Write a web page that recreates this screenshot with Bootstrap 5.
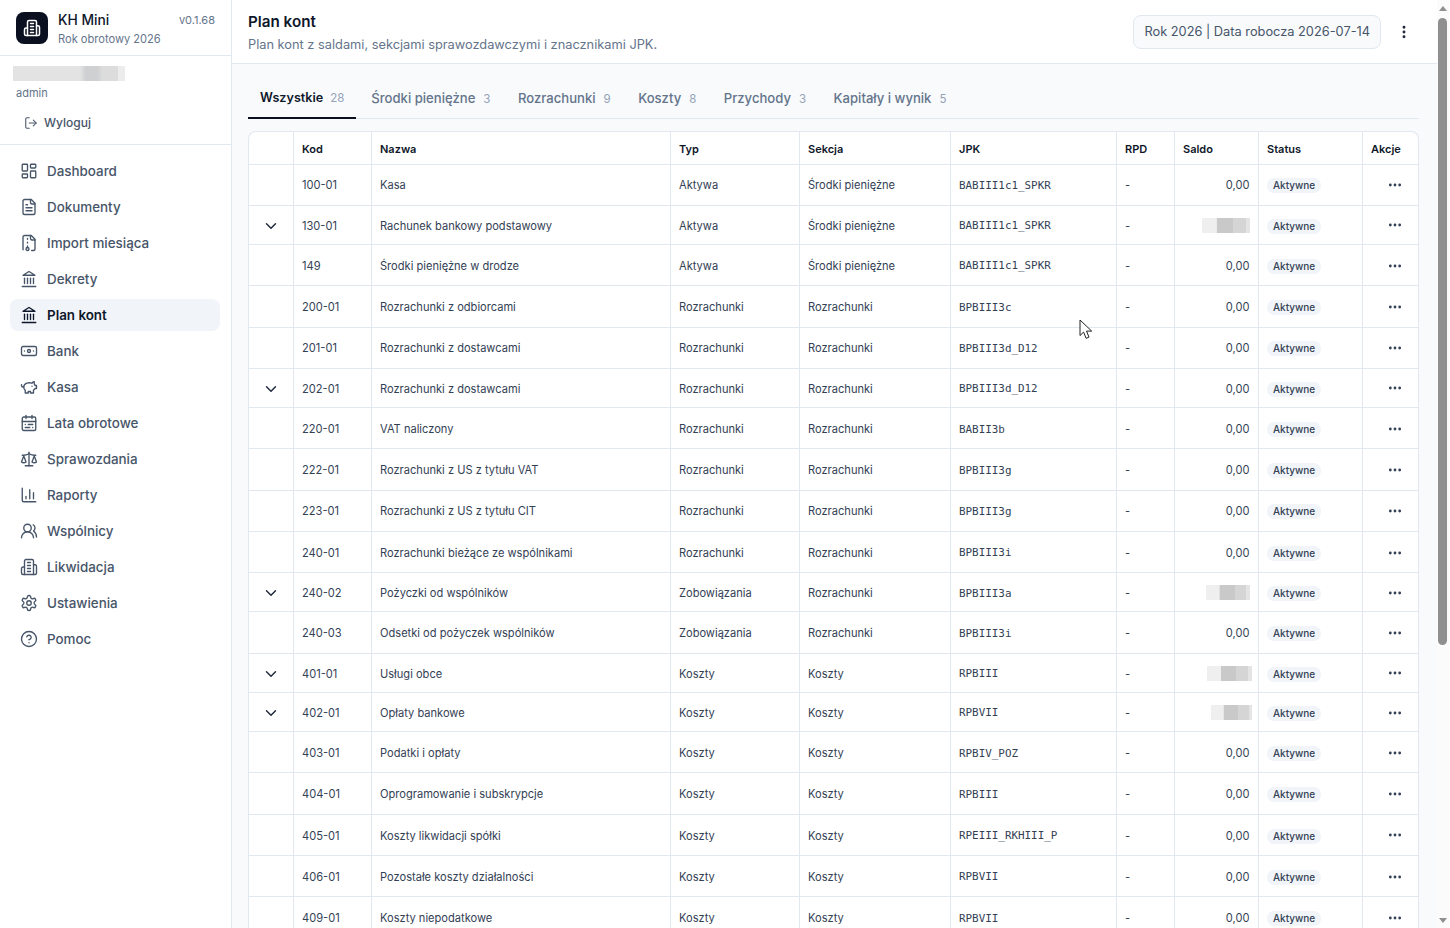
<!DOCTYPE html>
<html lang="pl">
<head>
    <meta charset="UTF-8">
    <meta name="viewport" content="width=device-width, initial-scale=1.0">
    <title>KH Mini - Plan kont</title>
    <link href="https://cdn.jsdelivr.net/npm/bootstrap@5.3.0/dist/css/bootstrap.min.css" rel="stylesheet">
    <style>
        html, body {
            height: 100%;
            overflow: hidden;
        }
        body {
            background-color: #f8fafc;
            font-family: Inter, "Noto Sans", sans-serif;
            color: #0f172a;
        }
        .ico {
            width: 18px;
            height: 18px;
            fill: none;
            stroke: currentColor;
            stroke-width: 2;
            stroke-linecap: round;
            stroke-linejoin: round;
            flex-shrink: 0;
        }
        .app-shell {
            height: 928px;
            position: relative;
            overflow: hidden;
        }

        /* sidebar */
        .side {
            width: 232px;
            flex-shrink: 0;
            background: #fff;
            border-right: 1px solid #e2e8f0;
        }
        .side-brand {
            height: 56px;
            padding: 12px 16px;
            border-bottom: 1px solid #e2e8f0;
            gap: 10px;
        }
        .brand-logo {
            width: 32px;
            height: 32px;
            flex-shrink: 0;
            border-radius: 8px;
            background: #0b1020;
            color: #fff;
        }
        .brand-name {
            font-size: 13.8px;
            font-weight: 500;
            line-height: 18px;
            margin-top: -1px;
        }
        .brand-year {
            font-size: 11.1px;
            line-height: 18px;
            margin-top: 1px;
            color: #64748b;
            white-space: nowrap;
        }
        .brand-ver {
            font-size: 11px;
            color: #64748b;
            margin-left: auto;
            margin-top: -1px;
            line-height: 18px;
        }
        .side-user {
            height: 89px;
            padding: 10px 13px 0;
            border-bottom: 1px solid #e2e8f0;
        }
        .user-blur {
            width: 112px;
            height: 15px;
            background: linear-gradient(90deg, #e3e3e3 0 60%, #cfd0d2 65% 75%, #dcdcdc 80% 94%, #ececec 94%);
        }
        .user-role {
            font-size: 11px;
            color: #64748b;
            margin: 5px 0 0 3px;
            line-height: 14px;
        }
        .logout-link {
            font-size: 12px;
            font-weight: 500;
            color: #475569;
            margin: 15px 0 0 11px;
            gap: 6px;
            line-height: 16px;
        }
        .logout-link .ico {
            width: 14px;
            height: 14px;
            stroke-width: 1.8;
        }
        .side-nav {
            padding: 10px 11px 0 10px;
            gap: 4px;
        }
        .side-item {
            height: 32px;
            padding: 0 10px;
            gap: 9px;
            font-size: 13.4px;
            font-weight: 500;
            color: #475569;
            border-radius: 8px;
            text-decoration: none;
        }
        .side-item .ico {
            width: 18px;
            height: 18px;
            stroke-width: 1.8;
        }
        .side-item.is-on {
            background: #f1f5f9;
            color: #0f172a;
            font-weight: 600;
        }

        /* main */
        .main-col {
            min-width: 0;
        }
        .top-head {
            height: 64px;
            flex-shrink: 0;
            background: #fff;
            border-bottom: 1px solid #e2e8f0;
            padding: 0 16px;
        }
        .head-text {
            padding-top: 4px;
        }
        .head-title {
            font-size: 15.2px;
            font-weight: 600;
            line-height: 20px;
            margin: 0;
        }
        .head-sub {
            font-size: 12.8px;
            line-height: 20px;
            color: #64748b;
            margin: 3px 0 0;
        }
        .year-chip {
            height: 34px;
            padding: 0 10px;
            border: 1px solid #e2e8f0;
            border-radius: 8px;
            background: #f8fafc;
            font-size: 12.8px;
            color: #475569;
        }
        .kebab {
            width: 16px;
            height: 16px;
            margin: 0 9px 0 15px;
            color: #1e293b;
            stroke-width: 2.4;
        }
        .body-pad {
            flex-shrink: 0;
            padding: 16px 18px 0 16px;
        }
        .acct-tabs {
            height: 39px;
            border-bottom: 1px solid #e2e8f0;
        }
        .acct-tabs .nav-link {
            height: 39px;
            padding: 0 12px;
            border: 0;
            border-radius: 0;
            font-size: 13.1px;
            font-weight: 500;
            line-height: 36px;
            color: #64748b;
            background: none;
            margin-right: 3.5px;
        }
        .acct-tabs .nav-link.active {
            color: #0f172a;
            font-size: 12.6px;
            font-weight: 600;
            border-bottom: 2px solid #0b1020;
            background: none;
            margin-right: 3px;
        }
        .tab-count {
            font-size: 11.5px;
            font-weight: 400;
            color: #94a3b8;
            margin-left: 8px;
        }
        .nav-link.active .tab-count {
            margin-left: 7px;
        }
        .table-box {
            margin-top: 12px;
            background: #fff;
            border: 1px solid #e2e8f0;
            border-bottom: 0;
            border-radius: 8px 8px 0 0;
            overflow: hidden;
        }
        .acct-table {
            table-layout: fixed;
            width: 1170px;
            margin: 0;
            border-collapse: collapse;
            font-size: 11.1px;
            color: #334155;
        }
        .acct-table th, .acct-table td {
            padding: 2px 8px 0 8.5px;
            border-bottom: 1px solid #e2e8f0;
            border-right: 1px solid #e2e8f0;
            vertical-align: middle;
            white-space: nowrap;
            overflow: hidden;
        }
        .acct-table th:last-child, .acct-table td:last-child {
            border-right: 0;
        }
        .acct-table th {
            height: 32px;
            font-size: 11px;
            font-weight: 600;
            color: #0f172a;
        }
        .acct-table tr.tall td { height: 41.3px; }
        .acct-table tr.low td { height: 39.2px; }
        .w-exp { width: 44px; }
        .w-kod { width: 78px; }
        .w-naz { width: 299px; }
        .w-typ { width: 129px; }
        .w-sek { width: 151px; }
        .w-jpk { width: 166px; }
        .w-rpd { width: 58px; }
        .w-sal { width: 84px; }
        .w-sta { width: 104px; }
        .w-akc { width: 57px; }
        .jpk-code {
            font-family: "DejaVu Sans Mono", "Liberation Mono", monospace;
            font-size: 10.9px;
        }
        .acct-table td.exp-cell {
            text-align: center;
            padding: 2px 0 0;
            color: #1e293b;
        }
        .exp-cell .ico {
            width: 18px;
            height: 18px;
            display: block;
            margin: 0 auto;
            stroke-width: 1.9;
        }
        .acct-table td.sal-cell {
            text-align: right;
        }
        .sal-blur {
            display: inline-block;
            height: 15px;
            vertical-align: middle;
            background: linear-gradient(90deg, #efefef 0 30%, #c9c9c9 32% 65%, #d5d5d5 65% 92%, #e4e4e4 92%);
            margin-bottom: 2px;
        }
        .blur-48 { width: 48px; }
        .blur-44 { width: 44px; }
        .blur-45 { width: 45px; margin-right: -2px; }
        .blur-41 { width: 41px; margin-right: -2px; }
        .status-pill {
            display: inline-block;
            padding: 0 6px;
            height: 15px;
            line-height: 15px;
            border-radius: 7px;
            background: #f1f5f9;
            font-size: 10px;
            font-weight: 500;
            color: #334155;
        }
        .acct-table td.act-cell {
            text-align: right;
            padding: 2px 16px 0 0;
            color: #334155;
        }
        .act-cell .ico {
            width: 16px;
            height: 16px;
            display: block;
            margin: 0 0 1px auto;
            stroke-width: 2.2;
        }

        /* browser scrollbar and pointer, both part of the screenshot */
        .fake-bar {
            width: 13px;
            flex-shrink: 0;
            background: #fbfbfb;
            padding: 18px 3px 0 1px;
        }
        .bar-thumb {
            height: 627px;
            background: #8f8f8f;
            border-radius: 5px;
        }
        .bar-arrow {
            position: absolute;
            right: 3px;
            width: 0;
            height: 0;
            border-left: 4px solid transparent;
            border-right: 4px solid transparent;
        }
        .bar-arrow.up { top: 6px; border-bottom: 5px solid #8f8f8f; }
        .bar-arrow.down { bottom: 5px; border-top: 5px solid #8f8f8f; }
        .mouse-ptr {
            position: absolute;
            left: 1079px;
            top: 319px;
            width: 13px;
            height: 21px;
        }
    </style>
</head>
<body>
    <svg width="0" height="0" class="position-absolute">
        <symbol id="i-building" viewBox="0 0 24 24"><path d="M6 22V4a2 2 0 0 1 2-2h8a2 2 0 0 1 2 2v18Z"/><path d="M6 12H4a2 2 0 0 0-2 2v6a2 2 0 0 0 2 2h2"/><path d="M18 9h2a2 2 0 0 1 2 2v9a2 2 0 0 1-2 2h-2"/><path d="M10 6h4"/><path d="M10 10h4"/><path d="M10 14h4"/><path d="M10 18h4"/></symbol>
        <symbol id="i-logout" viewBox="0 0 24 24"><path d="M9 21H5a2 2 0 0 1-2-2V5a2 2 0 0 1 2-2h4"/><polyline points="16 17 21 12 16 7"/><line x1="21" y1="12" x2="9" y2="12"/></symbol>
        <symbol id="i-dash" viewBox="0 0 24 24"><rect width="7" height="9" x="3" y="3" rx="1"/><rect width="7" height="5" x="14" y="3" rx="1"/><rect width="7" height="9" x="14" y="12" rx="1"/><rect width="7" height="5" x="3" y="16" rx="1"/></symbol>
        <symbol id="i-doc" viewBox="0 0 24 24"><path d="M15 2H6a2 2 0 0 0-2 2v16a2 2 0 0 0 2 2h12a2 2 0 0 0 2-2V7Z"/><path d="M14 2v4a2 2 0 0 0 2 2h4"/><path d="M10 9H8"/><path d="M16 13H8"/><path d="M16 17H8"/></symbol>
        <symbol id="i-import" viewBox="0 0 24 24"><path d="M10 12v-1"/><path d="M10 18v-2"/><path d="M10 7V6"/><path d="M14 2v4a2 2 0 0 0 2 2h4"/><path d="M15.5 22H18a2 2 0 0 0 2-2V7l-5-5H6a2 2 0 0 0-2 2v16a2 2 0 0 0 .274 1.01"/><circle cx="10" cy="20" r="2"/></symbol>
        <symbol id="i-bank" viewBox="0 0 24 24"><line x1="3" y1="22" x2="21" y2="22"/><line x1="6" y1="18" x2="6" y2="11"/><line x1="10" y1="18" x2="10" y2="11"/><line x1="14" y1="18" x2="14" y2="11"/><line x1="18" y1="18" x2="18" y2="11"/><polygon points="12 2 20 7 4 7"/></symbol>
        <symbol id="i-note" viewBox="0 0 24 24"><rect width="20" height="12" x="2" y="6" rx="2"/><circle cx="12" cy="12" r="2"/><path d="M6 12h.01M18 12h.01"/></symbol>
        <symbol id="i-piggy" viewBox="0 0 24 24"><path d="M19 5c-1.5 0-2.8 1.4-3 2-3.5-1.5-11-.3-11 5 0 1.8 0 3 2 4.5V20h4v-2h3v2h4v-4c1-.5 1.7-1 2-2h2v-4h-2c0-1-.5-1.5-1-2V5z"/><path d="M2 9v1c0 1.1.9 2 2 2h1"/><path d="M16 11h.01"/></symbol>
        <symbol id="i-cal" viewBox="0 0 24 24"><rect width="18" height="18" x="3" y="4" rx="2"/><path d="M16 2v4"/><path d="M3 10h18"/><path d="M8 2v4"/><path d="M17 14h-6"/><path d="M13 18H7"/><path d="M7 14h.01"/><path d="M17 18h.01"/></symbol>
        <symbol id="i-scale" viewBox="0 0 24 24"><path d="m16 16 3-8 3 8c-.87.65-1.92 1-3 1s-2.13-.35-3-1Z"/><path d="m2 16 3-8 3 8c-.87.65-1.92 1-3 1s-2.13-.35-3-1Z"/><path d="M7 21h10"/><path d="M12 3v18"/><path d="M3 7h2c2 0 5-1 7-2 2 1 5 2 7 2h2"/></symbol>
        <symbol id="i-chart" viewBox="0 0 24 24"><path d="M3 3v16a2 2 0 0 0 2 2h16"/><path d="M18 17V9"/><path d="M13 17V5"/><path d="M8 17v-3"/></symbol>
        <symbol id="i-users" viewBox="0 0 24 24"><path d="M18 21a8 8 0 0 0-16 0"/><circle cx="10" cy="8" r="5"/><path d="M22 20c0-3.37-2-6.5-4-8a5 5 0 0 0-.45-8.3"/></symbol>
        <symbol id="i-gear" viewBox="0 0 24 24"><path d="M12.22 2h-.44a2 2 0 0 0-2 2v.18a2 2 0 0 1-1 1.73l-.43.25a2 2 0 0 1-2 0l-.15-.08a2 2 0 0 0-2.73.73l-.22.38a2 2 0 0 0 .73 2.73l.15.1a2 2 0 0 1 1 1.72v.51a2 2 0 0 1-1 1.74l-.15.09a2 2 0 0 0-.73 2.73l.22.38a2 2 0 0 0 2.73.73l.15-.08a2 2 0 0 1 2 0l.43.25a2 2 0 0 1 1 1.73V20a2 2 0 0 0 2 2h.44a2 2 0 0 0 2-2v-.18a2 2 0 0 1 1-1.73l.43-.25a2 2 0 0 1 2 0l.15.08a2 2 0 0 0 2.73-.73l.22-.39a2 2 0 0 0-.73-2.73l-.15-.08a2 2 0 0 1-1-1.74v-.5a2 2 0 0 1 1-1.74l.15-.09a2 2 0 0 0 .73-2.73l-.22-.38a2 2 0 0 0-2.73-.73l-.15.08a2 2 0 0 1-2 0l-.43-.25a2 2 0 0 1-1-1.73V4a2 2 0 0 0-2-2z"/><circle cx="12" cy="12" r="3"/></symbol>
        <symbol id="i-help" viewBox="0 0 24 24"><circle cx="12" cy="12" r="10"/><path d="M9.09 9a3 3 0 0 1 5.83 1c0 2-3 3-3 3"/><path d="M12 17h.01"/></symbol>
        <symbol id="i-chev" viewBox="0 0 24 24"><path d="m6 9 6 6 6-6"/></symbol>
        <symbol id="i-dots" viewBox="0 0 24 24"><circle cx="12" cy="12" r="1"/><circle cx="19" cy="12" r="1"/><circle cx="5" cy="12" r="1"/></symbol>
        <symbol id="i-kebab" viewBox="0 0 24 24"><circle cx="12" cy="12" r="1"/><circle cx="12" cy="5" r="1"/><circle cx="12" cy="19" r="1"/></symbol>
    </svg>

    <div class="app-shell d-flex">
        <aside class="side">
            <div class="side-brand d-flex">
                <div class="brand-logo d-flex align-items-center justify-content-center">
                    <svg class="ico"><use href="#i-building"/></svg>
                </div>
                <div>
                    <div class="brand-name">KH Mini</div>
                    <div class="brand-year">Rok obrotowy 2026</div>
                </div>
                <div class="brand-ver">v0.1.68</div>
            </div>
            <div class="side-user">
                <div class="user-blur"></div>
                <div class="user-role">admin</div>
                <div class="logout-link d-flex align-items-center">
                    <svg class="ico"><use href="#i-logout"/></svg>Wyloguj
                </div>
            </div>
            <nav class="side-nav d-flex flex-column" id="sideNav"></nav>
        </aside>

        <div class="main-col flex-grow-1 d-flex flex-column">
            <header class="top-head d-flex align-items-center justify-content-between">
                <div class="head-text">
                    <h1 class="head-title">Plan kont</h1>
                    <p class="head-sub">Plan kont z saldami, sekcjami sprawozdawczymi i znacznikami JPK.</p>
                </div>
                <div class="d-flex align-items-center">
                    <div class="year-chip d-flex align-items-center">Rok 2026 | Data robocza 2026-07-14</div>
                    <svg class="ico kebab"><use href="#i-kebab"/></svg>
                </div>
            </header>
            <div class="body-pad">
                <ul class="nav acct-tabs" id="acctTabs"></ul>
                <div class="table-box">
                    <table class="acct-table">
                        <thead>
                            <tr>
                                <th class="w-exp"></th>
                                <th class="w-kod">Kod</th>
                                <th class="w-naz">Nazwa</th>
                                <th class="w-typ">Typ</th>
                                <th class="w-sek">Sekcja</th>
                                <th class="w-jpk">JPK</th>
                                <th class="w-rpd">RPD</th>
                                <th class="w-sal">Saldo</th>
                                <th class="w-sta">Status</th>
                                <th class="w-akc">Akcje</th>
                            </tr>
                        </thead>
                        <tbody id="acctRows"></tbody>
                    </table>
                </div>
            </div>
        </div>

        <div class="fake-bar">
            <div class="bar-thumb"></div>
            <div class="bar-arrow up"></div>
            <div class="bar-arrow down"></div>
        </div>

        <svg class="mouse-ptr" viewBox="0 0 13 21"><path d="M1 1v15.5l3.6-3.4 2.5 6.2 2.9-1.2-2.5-6h5.2Z" fill="#fff" stroke="#222" stroke-width="1"/></svg>
    </div>

    <script>
        const navItems = [
            ['i-dash', 'Dashboard'], ['i-doc', 'Dokumenty'], ['i-import', 'Import miesiąca'],
            ['i-bank', 'Dekrety'], ['i-bank', 'Plan kont', true], ['i-note', 'Bank'],
            ['i-piggy', 'Kasa'], ['i-cal', 'Lata obrotowe'], ['i-scale', 'Sprawozdania'],
            ['i-chart', 'Raporty'], ['i-users', 'Wspólnicy'], ['i-building', 'Likwidacja'],
            ['i-gear', 'Ustawienia'], ['i-help', 'Pomoc']
        ];
        document.getElementById('sideNav').innerHTML = navItems.map(n =>
            `<a class="side-item d-flex align-items-center${n[2] ? ' is-on' : ''}" href="#"><svg class="ico"><use href="#${n[0]}"/></svg>${n[1]}</a>`
        ).join('');

        const tabs = [['Wszystkie', 28], ['Środki pieniężne', 3], ['Rozrachunki', 9], ['Koszty', 8], ['Przychody', 3], ['Kapitały i wynik', 5]];
        document.getElementById('acctTabs').innerHTML = tabs.map((t, i) =>
            `<li class="nav-item"><a class="nav-link${i === 0 ? ' active' : ''}" href="#">${t[0]}<span class="tab-count">${t[1]}</span></a></li>`
        ).join('');

        // kod, nazwa, typ, sekcja, jpk, expandable, blurred saldo width
        const SP = 'Środki pieniężne', RZ = 'Rozrachunki', KO = 'Koszty';
        const rows = [
            ['100-01', 'Kasa', 'Aktywa', SP, 'BABIII1c1_SPKR'],
            ['130-01', 'Rachunek bankowy podstawowy', 'Aktywa', SP, 'BABIII1c1_SPKR', 1, 48],
            ['149', 'Środki pieniężne w drodze', 'Aktywa', SP, 'BABIII1c1_SPKR'],
            ['200-01', 'Rozrachunki z odbiorcami', RZ, RZ, 'BPBIII3c'],
            ['201-01', 'Rozrachunki z dostawcami', RZ, RZ, 'BPBIII3d_D12'],
            ['202-01', 'Rozrachunki z dostawcami', RZ, RZ, 'BPBIII3d_D12', 1],
            ['220-01', 'VAT naliczony', RZ, RZ, 'BABII3b'],
            ['222-01', 'Rozrachunki z US z tytułu VAT', RZ, RZ, 'BPBIII3g'],
            ['223-01', 'Rozrachunki z US z tytułu CIT', RZ, RZ, 'BPBIII3g'],
            ['240-01', 'Rozrachunki bieżące ze wspólnikami', RZ, RZ, 'BPBIII3i'],
            ['240-02', 'Pożyczki od wspólników', 'Zobowiązania', RZ, 'BPBIII3a', 1, 44],
            ['240-03', 'Odsetki od pożyczek wspólników', 'Zobowiązania', RZ, 'BPBIII3i'],
            ['401-01', 'Usługi obce', KO, KO, 'RPBIII', 1, 45],
            ['402-01', 'Opłaty bankowe', KO, KO, 'RPBVII', 1, 41],
            ['403-01', 'Podatki i opłaty', KO, KO, 'RPBIV_POZ'],
            ['404-01', 'Oprogramowanie i subskrypcje', KO, KO, 'RPBIII'],
            ['405-01', 'Koszty likwidacji spółki', KO, KO, 'RPEIII_RKHIII_P'],
            ['406-01', 'Pozostałe koszty działalności', KO, KO, 'RPBVII'],
            ['409-01', 'Koszty niepodatkowe', KO, KO, 'RPBVII']
        ];
        document.getElementById('acctRows').innerHTML = rows.map(r => `
            <tr class="${r[5] ? 'low' : 'tall'}">
                <td class="exp-cell">${r[5] ? '<svg class="ico"><use href="#i-chev"/></svg>' : ''}</td>
                <td>${r[0]}</td>
                <td>${r[1]}</td>
                <td>${r[2]}</td>
                <td>${r[3]}</td>
                <td><span class="jpk-code">${r[4]}</span></td>
                <td>-</td>
                <td class="sal-cell">${r[6] ? `<span class="sal-blur blur-${r[6]}"></span>` : '0,00'}</td>
                <td><span class="status-pill">Aktywne</span></td>
                <td class="act-cell"><svg class="ico"><use href="#i-dots"/></svg></td>
            </tr>`).join('');
    </script>
    <script src="https://cdn.jsdelivr.net/npm/bootstrap@5.3.0/dist/js/bootstrap.bundle.min.js"></script>
</body>
</html>
